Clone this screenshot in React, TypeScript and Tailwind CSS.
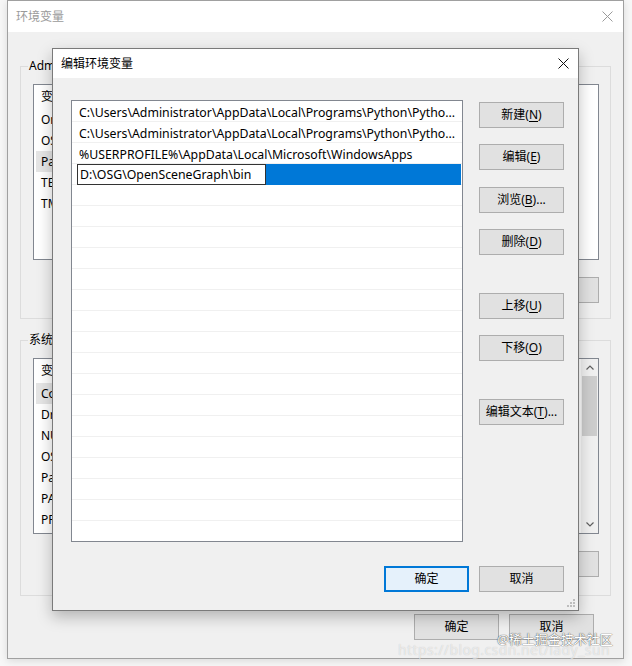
import React from "react";

const font = "font-['Noto_Sans','Noto_Sans_CJK_SC',sans-serif]";

function CloseIcon({ color }: { color: string }) {
  return (
    <svg width="11" height="11" viewBox="0 0 11 11">
      <path d="M0.5 0.5 L10.5 10.5 M10.5 0.5 L0.5 10.5" stroke={color} strokeWidth="1" />
    </svg>
  );
}

function WinButton({
  label,
  keyChar,
  tail = "",
  focused = false,
}: {
  label: string;
  keyChar?: string;
  tail?: string;
  focused?: boolean;
}) {
  return (
    <div
      className={
        focused
          ? "w-[85px] h-[26px] shrink-0 flex items-center justify-center bg-[#e5f1fb] border-2 border-[#0078d7] text-[12px] text-black"
          : "w-[85px] h-[26px] shrink-0 flex items-center justify-center bg-[#e1e1e1] border border-[#adadad] text-[12px] text-black"
      }
    >
      <span>
        {label}
        {keyChar && (
          <>
            (<span className="underline underline-offset-2">{keyChar}</span>)
          </>
        )}
        {tail}
      </span>
    </div>
  );
}

const userVars = ["OneDrive", "OSG_FILE_PATH", "Path", "TEMP", "TMP"];
const sysVars = ["ComSpec", "DriverData", "NUMBER_OF_PROCESSORS", "OS", "Path", "PATHEXT", "PROCESSOR_ARCHITECTURE"];

function VarList({ rows, selected, scroll = false }: { rows: string[]; selected: number; scroll?: boolean }) {
  return (
    <div className="h-[176px] border border-[#828790] bg-white flex overflow-hidden">
      <div className="flex-1 flex flex-col">
        <div className="h-[24px] flex items-center pl-[7px] text-[12px] text-black">
          <span className="w-[160px]">变量</span>
          <span>值</span>
        </div>
        {rows.map((r, i) => (
          <div key={r} className="h-[21px] flex items-center pl-[2px] text-[12px] text-black">
            <span className={i === selected ? "w-[160px] h-[21px] pl-[5px] flex items-center bg-[#e5e5e5]" : "w-[160px] pl-[5px]"}>
              {r}
            </span>
          </div>
        ))}
      </div>
      {scroll && (
        <div className="w-[17px] bg-[#f0f0f0] flex flex-col items-center">
          <div className="h-[17px] flex items-center justify-center">
            <svg width="8" height="5" viewBox="0 0 8 5">
              <path d="M0.5 4.5 L4 1 L7.5 4.5" stroke="#606060" fill="none" strokeWidth="1.2" />
            </svg>
          </div>
          <div className="w-[15px] h-[60px] bg-[#cdcdcd]" />
          <div className="flex-1" />
          <div className="h-[17px] flex items-center justify-center">
            <svg width="8" height="5" viewBox="0 0 8 5">
              <path d="M0.5 0.5 L4 4 L7.5 0.5" stroke="#606060" fill="none" strokeWidth="1.2" />
            </svg>
          </div>
        </div>
      )}
    </div>
  );
}

const pathRows = [
  "C:\\Users\\Administrator\\AppData\\Local\\Programs\\Python\\Pytho...",
  "C:\\Users\\Administrator\\AppData\\Local\\Programs\\Python\\Pytho...",
  "%USERPROFILE%\\AppData\\Local\\Microsoft\\WindowsApps",
];

export default function App() {
  const emptyRows = Array.from({ length: 17 });
  return (
    <div className={`relative w-[632px] h-[666px] overflow-hidden bg-[#f7f7f7] ${font}`}>
      {/* Background window: 环境变量 */}
      <div className="ml-[7px] w-[617px] h-[659px] border border-[#a0a0a0] bg-[#f0f0f0] flex flex-col shadow-[0_2px_8px_rgba(0,0,0,0.12)]">
        <div className="h-[31px] bg-white flex items-center justify-between pl-[8px] pr-[10px]">
          <span className="text-[12px] text-[#9a9a9a]">环境变量</span>
          <CloseIcon color="#9a9a9a" />
        </div>
        <div className="px-[12px] flex flex-col">
          <div className="relative mt-[34px] h-[253px] border border-[#dcdcdc] pl-[12px] pr-[11px] pt-[17px]">
            <span className="absolute -top-[10px] left-[7px] bg-[#f0f0f0] px-[1px] text-[12px] text-black">
              Administrator 的用户变量(U)
            </span>
            <VarList rows={userVars} selected={2} />
            <div className="mt-[17px] flex justify-end gap-[10px]">
              <WinButton label="新建" keyChar="N" tail="..." />
              <WinButton label="编辑" keyChar="E" tail="..." />
              <WinButton label="删除" keyChar="D" />
            </div>
          </div>
          <div className="relative mt-[21px] h-[256px] border border-[#dcdcdc] pl-[12px] pr-[11px] pt-[17px]">
            <span className="absolute -top-[10px] left-[7px] bg-[#f0f0f0] px-[1px] text-[12px] text-black">
              系统变量(S)
            </span>
            <VarList rows={sysVars} selected={0} scroll />
            <div className="mt-[17px] flex justify-end gap-[10px]">
              <WinButton label="新建" keyChar="W" tail="..." />
              <WinButton label="编辑" keyChar="I" tail="..." />
              <WinButton label="删除" keyChar="L" />
            </div>
          </div>
          <div className="mt-[18px] pr-[17px] flex justify-end gap-[10px]">
            <WinButton label="确定" />
            <WinButton label="取消" />
          </div>
        </div>
      </div>

      {/* Foreground dialog: 编辑环境变量 */}
      <div className="absolute left-[52px] top-[48px] w-[527px] h-[563px] border border-[#7a7a7a] bg-[#f0f0f0] flex flex-col shadow-[0_6px_14px_rgba(0,0,0,0.25)]">
        <div className="h-[29px] bg-white flex items-center justify-between pl-[8px] pr-[9px]">
          <span className="text-[12px] text-black">编辑环境变量</span>
          <CloseIcon color="#111" />
        </div>
        <div className="flex pl-[18px] pt-[22px]">
          <div className="w-[392px] h-[442px] border border-[#828790] bg-white flex flex-col overflow-hidden">
            {pathRows.map((p, i) => (
              <div
                key={i}
                className="h-[21px] shrink-0 flex items-center pl-[7px] pt-[4px] border-b border-[#f0f0f0] text-[12.3px] text-black whitespace-nowrap"
              >
                {p}
              </div>
            ))}
            <div className="h-[21px] shrink-0 flex items-center pl-[5px] pr-[1px] bg-white border-b border-[#f0f0f0]">
              <div className="w-[189px] h-[21px] border border-[#333] bg-white flex items-center pl-[2px] pt-[3px] text-[12.3px] text-black">
                D:\OSG\OpenSceneGraph\bin
              </div>
              <div className="flex-1 h-[21px] bg-[#0078d7]" />
            </div>
            {emptyRows.map((_, i) => (
              <div key={i} className="h-[21px] shrink-0 border-b border-[#f0f0f0]" />
            ))}
          </div>
          <div className="ml-[16px] pt-[2px] flex flex-col">
            <WinButton label="新建" keyChar="N" />
            <div className="mt-[16px]">
              <WinButton label="编辑" keyChar="E" />
            </div>
            <div className="mt-[17px]">
              <WinButton label="浏览" keyChar="B" tail="..." />
            </div>
            <div className="mt-[16px]">
              <WinButton label="删除" keyChar="D" />
            </div>
            <div className="mt-[38px]">
              <WinButton label="上移" keyChar="U" />
            </div>
            <div className="mt-[16px]">
              <WinButton label="下移" keyChar="O" />
            </div>
            <div className="mt-[38px]">
              <WinButton label="编辑文本" keyChar="T" tail="..." />
            </div>
          </div>
        </div>
        <div className="mt-[24px] pr-[14px] flex justify-end gap-[10px]">
          <WinButton label="确定" focused />
          <WinButton label="取消" />
        </div>
        <div className="flex-1 flex items-end justify-end pr-[2px] pb-[2px]">
          <svg width="10" height="10" viewBox="0 0 10 10">
            <rect x="7" y="1" width="2" height="2" fill="#bdbdbd" />
            <rect x="4" y="4" width="2" height="2" fill="#bdbdbd" />
            <rect x="7" y="4" width="2" height="2" fill="#bdbdbd" />
            <rect x="1" y="7" width="2" height="2" fill="#bdbdbd" />
            <rect x="4" y="7" width="2" height="2" fill="#bdbdbd" />
            <rect x="7" y="7" width="2" height="2" fill="#bdbdbd" />
          </svg>
        </div>
      </div>

      {/* Watermarks */}
      <span className="absolute left-[398px] top-[639px] text-[14px] tracking-[0.4px] text-white/60 [text-shadow:0_0_1px_rgba(0,0,0,0.2)] whitespace-nowrap">
        https://blog.csdn.net/lady_sun
      </span>
      <span className="absolute left-[497px] top-[630px] text-[13px] text-white [text-shadow:0_0_1px_rgba(0,0,0,0.7),0_0_1px_rgba(0,0,0,0.5)] whitespace-nowrap">
        @稀土掘金技术社区
      </span>
    </div>
  );
}
